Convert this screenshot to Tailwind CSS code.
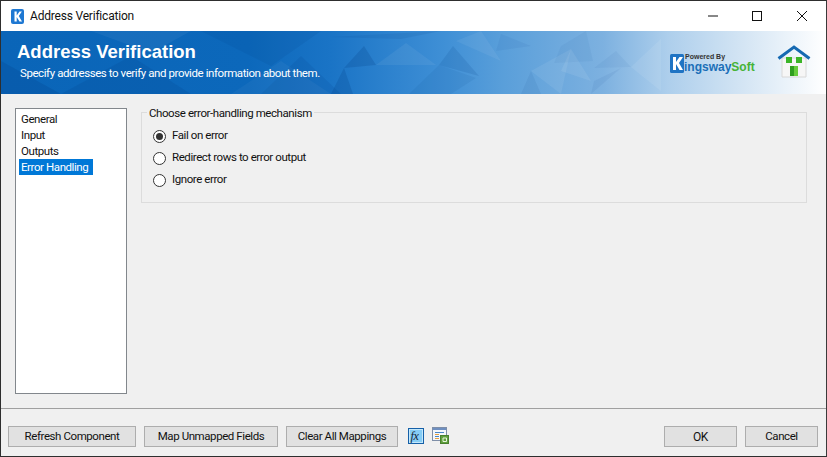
<!DOCTYPE html>
<html>
<head>
<meta charset="utf-8">
<script src="https://cdn.jsdelivr.net/npm/@tailwindcss/browser@4"></script>
</head>
<body class="m-0 overflow-hidden bg-[#f0f0f0]">
<div class="w-[827px] h-[457px] flex flex-col border border-[#2e2e2e] border-r-[#3a3a3a] bg-[#f0f0f0] font-['Roboto',sans-serif] text-[11.500px] tracking-[-0.42px] text-[#111] overflow-hidden">
  <!-- Title bar -->
  <div class="h-[30px] shrink-0 bg-white flex items-center">
    <svg class="ml-[10px] w-[13px] h-[15px]" viewBox="0 0 13 15"><rect width="13" height="15" rx="2" fill="#1e78d2"/><path d="M3.500 2.500h2.200v4L8.500 2.500h2.400L7.800 7l3.200 5.500H8.500L5.700 8v4.500H3.500z" fill="#fff"/></svg>
    <span class="ml-[6px] text-[12px] tracking-[-0.2px] text-[#111]">Address Verification</span>
    <div class="ml-auto mr-[1px] flex items-center">
      <svg class="w-[45px] h-[30px]" viewBox="0 0 45 30"><path d="M17 15h10" stroke="#111" fill="none"/></svg>
      <svg class="w-[45px] h-[30px]" viewBox="0 0 45 30"><rect x="16.500" y="10.500" width="9" height="9" stroke="#111" fill="none"/></svg>
      <svg class="w-[44px] h-[30px]" viewBox="0 0 44 30"><path d="M16 10l10 10M26 10l-10 10" stroke="#111" fill="none"/></svg>
    </div>
  </div>
  <!-- Banner -->
  <div class="relative h-[63px] shrink-0 overflow-hidden bg-[linear-gradient(90deg,#0a65b8_0%,#0c68bb_30%,#1a74c6_40%,#4090d6_54%,#5a9fda_61%,#7db1e0_73%,#aecfec_81%,#d4e5f4_90%,#ffffff_100%)]">
    <svg class="absolute inset-0" width="825" height="63" viewBox="0 0 825 63">
      <g fill="#003a80">
        <polygon points="0,30 60,63 0,63" opacity=".2"/>
        <polygon points="60,63 130,25 190,63" opacity=".14"/>
        <polygon points="200,0 270,35 320,0" opacity=".1"/>
        <polygon points="260,63 300,25 340,63" opacity=".12"/>
        <polygon points="343,37 363,15 375,34" opacity=".2"/>
        <polygon points="330,63 343,37 352,63" opacity=".2"/>
        <polygon points="438,34 452,15 478,45" opacity=".13"/>
        <polygon points="408,63 438,34 475,47 450,63" opacity=".08"/>
        <polygon points="330,6 440,0 400,8" opacity=".1"/>
        <polygon points="500,3 530,15 495,20" opacity=".06"/>
        <polygon points="520,63 530,40 540,63" opacity=".07"/>
        <polygon points="560,15 585,0 592,30 553,32" opacity=".05"/>
        <polygon points="593,50 620,37 590,63" opacity=".06"/>
        <polygon points="593,37 615,20 630,36" opacity=".05"/>
      </g>
      <g fill="#ffffff">
        <polygon points="90,0 150,22 190,0" opacity=".05"/>
        <polygon points="230,63 280,30 330,63" opacity=".04"/>
        <polygon points="375,34 405,12 435,34" opacity=".06"/>
        <polygon points="455,10 480,0 500,30" opacity=".06"/>
        <polygon points="530,40 570,18 560,63" opacity=".07"/>
        <polygon points="570,18 590,50 560,40" opacity=".08"/>
        <polygon points="630,36 660,8 660,60" opacity=".08"/>
      </g>
    </svg>
    <div class="relative pl-[16px]">
      <div class="pt-[11px] font-['Liberation_Sans',sans-serif] font-bold text-[18.500px] tracking-normal leading-[20px] text-white whitespace-nowrap">Address Verification</div>
      <div class="pl-[3px] pt-[4px] leading-[14px] text-white whitespace-nowrap">Specify addresses to verify and provide information about them.</div>
    </div>
    <div class="absolute left-[669px] top-[21px] w-[86px] h-[25px] font-['Liberation_Sans',sans-serif] tracking-normal">
      <svg class="absolute left-0 top-[2px]" width="14" height="19" viewBox="0 0 14 19"><rect width="14" height="19" rx="1.500" fill="#1f74c4"/><path d="M3 3h3v5l3.500-5H13L9 9l4 7H9.500L6 10v6H3z" fill="#fff"/></svg>
      <span class="absolute left-[15px] top-[1px] text-[7px] leading-[8px] font-bold text-[#333] whitespace-nowrap">Powered By</span>
      <span class="absolute left-[14px] top-[8px] text-[12px] leading-[15px] font-bold whitespace-nowrap"><span class="text-[#1b6fb8]">ingsway</span><span class="text-[#46b336]">Soft</span></span>
    </div>
    <svg class="absolute left-[776px] top-[14px]" width="34" height="34" viewBox="0 0 34 34">
      <path d="M5 13h24v19H5z" fill="#f6f6f6" stroke="#d8d8d8"/>
      <path d="M1.500 13.500L17 2l15.500 11.500" fill="none" stroke="#1569b2" stroke-width="3"/>
      <rect x="9" y="12" width="6" height="6" fill="#3cb528"/>
      <rect x="19" y="12" width="6" height="6" fill="#3cb528"/>
      <rect x="13" y="21" width="8" height="10" fill="#2f9e1f"/>
      <rect x="17" y="21" width="4" height="10" fill="#66cc3c"/>
    </svg>
  </div>
  <!-- Body -->
  <div class="flex-1 flex items-start pl-[14px] pt-[14px] pr-[19px]">
    <div class="w-[112px] h-[286px] shrink-0 border border-[#82878c] bg-white pl-[3px] pt-[2px]">
      <div class="h-[16px] leading-[17px] pl-[2px] whitespace-nowrap">General</div>
      <div class="h-[16px] leading-[17px] pl-[2px] whitespace-nowrap">Input</div>
      <div class="h-[16px] leading-[17px] pl-[2px] whitespace-nowrap">Outputs</div>
      <div class="h-[16px] leading-[17px] pl-[2px] w-[74px] bg-[#0078d7] text-white whitespace-nowrap">Error Handling</div>
    </div>
    <div class="relative ml-[14px] mt-[4px] flex-1 h-[91px] border border-[#dcdcdc] pl-[11px] pt-[16px]">
      <span class="absolute left-[5px] top-[-7px] bg-[#f0f0f0] px-[2px] leading-[14px] whitespace-nowrap">Choose error-handling mechanism</span>
      <div class="flex flex-col gap-[8px]">
        <label class="flex items-center h-[14px] gap-[6px]">
          <span class="w-[13px] h-[13px] rounded-full border border-[#333] bg-white flex items-center justify-center"><span class="w-[7px] h-[7px] rounded-full bg-[#333]"></span></span>
          <span>Fail on error</span>
        </label>
        <label class="flex items-center h-[14px] gap-[6px]">
          <span class="w-[13px] h-[13px] rounded-full border border-[#333] bg-white"></span>
          <span>Redirect rows to error output</span>
        </label>
        <label class="flex items-center h-[14px] gap-[6px]">
          <span class="w-[13px] h-[13px] rounded-full border border-[#333] bg-white"></span>
          <span>Ignore error</span>
        </label>
      </div>
    </div>
  </div>
  <!-- Footer -->
  <div class="h-[48px] shrink-0 border-t border-[#a0a0a0] flex items-start pt-[17px] pl-[7px] pr-[8px]">
    <button class="w-[128px] h-[21px] pt-[1px] border border-[#adadad] bg-[#e1e1e1]">Refresh Component</button>
    <button class="ml-[8px] w-[134px] h-[21px] pt-[1px] border border-[#adadad] bg-[#e1e1e1]">Map Unmapped Fields</button>
    <button class="ml-[8px] w-[112px] h-[21px] pt-[1px] border border-[#adadad] bg-[#e1e1e1]">Clear All Mappings</button>
    <svg class="ml-[10px] mt-[2px]" width="16" height="16" viewBox="0 0 16 16">
      <rect x=".5" y=".5" width="15" height="15" fill="#86cdf5" stroke="#1560a8"/>
      <rect x="1.500" y="1.500" width="13" height="13" fill="none" stroke="#c4e8fb"/>
      <text x="2.500" y="12" font-family="Liberation Serif" font-style="italic" font-size="12" fill="#123">fx</text>
    </svg>
    <svg class="ml-[8px] mt-[1px]" width="17" height="17" viewBox="0 0 17 17">
      <rect x=".5" y=".5" width="14" height="13" fill="#f4f7fb" stroke="#7f8fa8"/>
      <rect x="1" y="1" width="13" height="2" fill="#6f8fc0"/>
      <path d="M3 5.500h9" stroke="#4a86c8"/><path d="M3 7.500h4" stroke="#e8a040"/><path d="M3 9.500h4" stroke="#4a86c8"/><path d="M3 11.500h4" stroke="#e8a040"/>
      <rect x="8.500" y="8.500" width="8" height="8" fill="#5fa13c" stroke="#4a8030"/>
      <path d="M11 11h3.500v3.500H11z" fill="none" stroke="#e8f3df"/>
    </svg>
    <button class="ml-auto w-[73px] h-[21px] pt-[1px] border border-[#adadad] bg-[#e1e1e1] text-[12px]">OK</button>
    <button class="ml-[8px] w-[73px] h-[21px] pt-[1px] border border-[#adadad] bg-[#e1e1e1]">Cancel</button>
  </div>
</div>
</body>
</html>
